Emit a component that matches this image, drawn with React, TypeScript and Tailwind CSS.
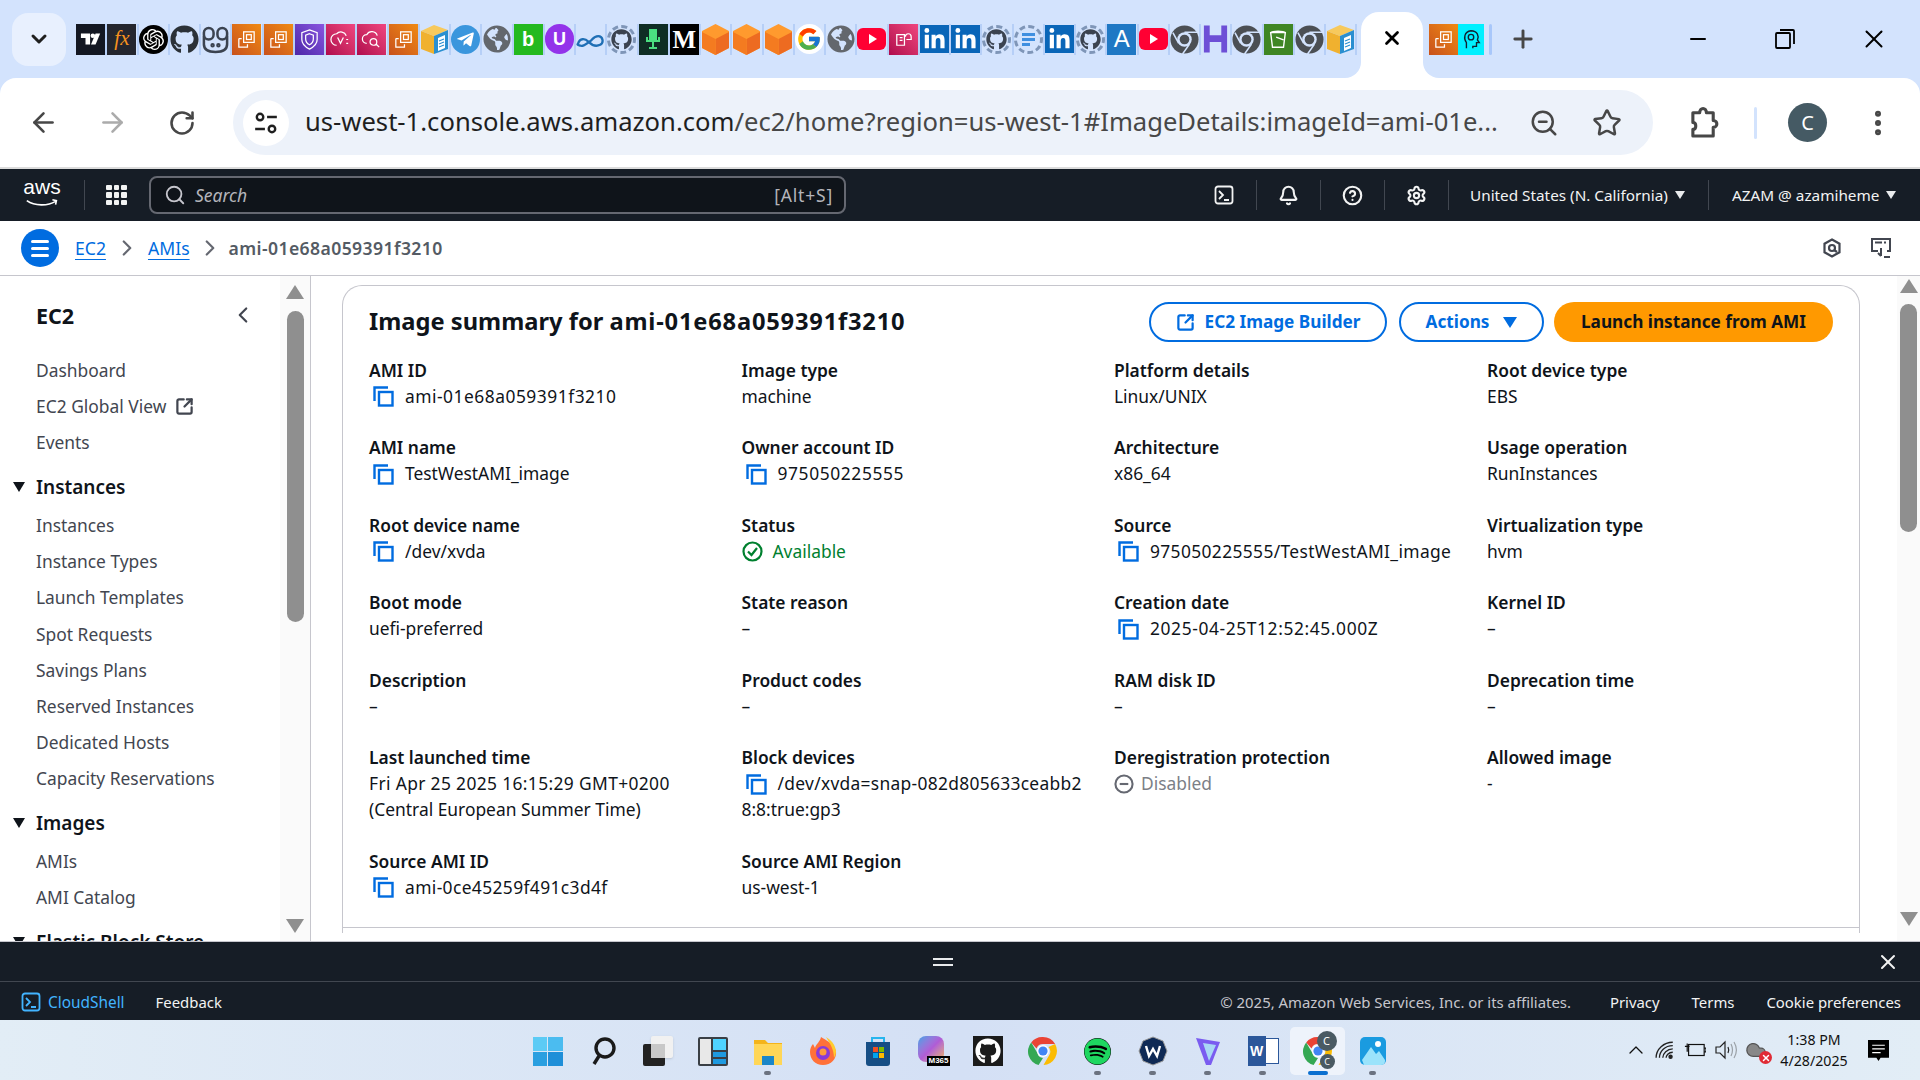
import type { ReactNode } from 'react';
import {
  ArrowLeft, ArrowRight, RotateCw, ZoomOut, Star, EllipsisVertical, X, Minus, Plus, ChevronDown,
  Search, Bell, CircleHelp, Settings, ChevronLeft, ChevronRight, ChevronUp, SquareArrowOutUpRight,
  Cloud,
} from 'lucide-react';
import { FaGithub, FaLinkedinIn, FaTelegramPlane, FaSpotify, FaGlobeAmericas } from 'react-icons/fa';
import { FcGoogle } from 'react-icons/fc';
import { SiOpenai } from 'react-icons/si';

const sans = 'font-["Noto_Sans",sans-serif]';

function Ec2Fav() {
  return (
    <div className="flex h-[31px] w-[29px] items-center justify-center bg-gradient-to-tr from-[#c8511b] to-[#f08a12]">
      <svg viewBox="0 0 24 24" className="h-[23px] w-[23px]" fill="none" stroke="#fff" strokeWidth="1.3">
        <rect x="9" y="4" width="11" height="11" />
        <rect x="12" y="7" width="5" height="5" />
        <path d="M4 11h3M4 11v9h9v-3" />
      </svg>
    </div>
  );
}

function PinkFav({ kind }: { kind: 'shield' | 'vpc' | 'cloud' | 'doc' }) {
  const bg = kind === 'shield' ? 'from-[#4d27a8] to-[#8a55e0]' : 'from-[#b0084d] to-[#f0457f]';
  return (
    <div className={`flex h-[31px] w-[29px] items-center justify-center bg-gradient-to-tr ${bg}`}>
      <svg viewBox="0 0 24 24" className="h-[23px] w-[23px]" fill="none" stroke="#fff" strokeWidth="1.3">
        {kind === 'shield' && <path d="M12 2l8 3v7c0 5-4 8-8 10-4-2-8-5-8-10V5zM12 6l4 1.5v4c0 3-2 5-4 6-2-1-4-3-4-6v-4z" />}
        {kind === 'vpc' && <path d="M8 18a5 5 0 010-12 6 6 0 0110 2M9 10l3 6 3-6M18 12h2M18 16h2" />}
        {kind === 'cloud' && <path d="M7 16a4 4 0 010-9 6 6 0 0111 1M14 11a3 3 0 100 7 3 3 0 000-7zM17 17l3 3" />}
        {kind === 'doc' && <path d="M5 7h8v11H5zM8 10h3M8 13h3M14 9a3 3 0 016 0v3h-5" />}
      </svg>
    </div>
  );
}

function BoxFav() {
  return (
    <svg viewBox="0 0 29 31" className="h-[31px] w-[29px]">
      <path d="M1 7l13-6 14 5-14 6z" fill="#f7c95c" />
      <path d="M1 7l13 5v18L1 25z" fill="#f0b12f" />
      <path d="M14 12l14-6v19l-14 5z" fill="#2a8fd0" />
      <path d="M18 14l7-3v13l-7 3z" fill="#fff" />
      <path d="M19 17l5-2M19 20l5-2M19 23l5-2" stroke="#2a8fd0" strokeWidth="1.2" />
    </svg>
  );
}

function HexFav() {
  return (
    <svg viewBox="0 0 29 31" className="h-[31px] w-[29px]">
      <path d="M14.5 0L28 7v17l-13.5 7L1 24V7z" fill="#ff9a2e" />
      <path d="M14.5 15L28 8v16l-13.5 7z" fill="#ed6b21" />
      <path d="M14.5 15L1 8v16l13.5 7z" fill="#f47b20" />
    </svg>
  );
}

function GhDashed() {
  return (
    <div className="flex h-[29px] w-[29px] items-center justify-center rounded-full border-[3px] border-dashed border-[#7f96b8]">
      <FaGithub className="h-[21px] w-[21px] text-[#3b4350]" />
    </div>
  );
}

function ChromeGray() {
  return (
    <svg viewBox="0 0 30 30" className="h-[29px] w-[29px]">
      <circle cx="15" cy="15" r="14.5" fill="#4b4f54" />
      <circle cx="15" cy="15" r="7.5" fill="#d3e3fd" />
      <circle cx="15" cy="15" r="5" fill="#4b4f54" />
      <path d="M15 7.5h13M9 19L3 8M20 20l-7 10" stroke="#d3e3fd" strokeWidth="1.6" />
    </svg>
  );
}

function Square({ bg, children }: { bg: string; children: ReactNode }) {
  return <div className={`flex h-[31px] w-[29px] items-center justify-center ${bg}`}>{children}</div>;
}

function Linked() {
  return (
    <div className="flex h-[28px] w-[29px] items-center justify-center bg-[#0a66b8]">
      <FaLinkedinIn className="h-[23px] w-[23px] text-white" />
    </div>
  );
}

function Yt() {
  return (
    <div className="flex h-[22px] w-[29px] items-center justify-center rounded-[6px] bg-[#ff0033]">
      <div className="ml-[2px] h-0 w-0 border-y-[5px] border-l-[8px] border-y-transparent border-l-white" />
    </div>
  );
}

const Globe = () => <FaGlobeAmericas className="h-[28px] w-[28px] text-[#63676d]" />;

const favicons: ReactNode[] = [
  <Square bg="bg-[#131722]">
    <svg viewBox="0 0 24 24" className="h-[22px] w-[22px]" fill="#fff"><path d="M1 6h10v12H6v-7H1z" /><circle cx="14" cy="8.5" r="2.5" /><path d="M17 18l5-12h-5l-5 12z" /></svg>
  </Square>,
  <Square bg="bg-[#24262e]"><span className="text-[21px] italic text-[#f7931e] font-['Liberation_Serif',serif]">fx</span></Square>,
  <div className="flex h-[29px] w-[29px] items-center justify-center rounded-full bg-black"><SiOpenai className="h-[21px] w-[21px] text-white" /></div>,
  <FaGithub className="h-[29px] w-[29px] text-[#2b3137]" />,
  <svg viewBox="0 0 30 30" className="h-[29px] w-[29px]" fill="none" stroke="#3b4350" strokeWidth="2.6"><rect x="3" y="3" width="10" height="12" rx="5" /><rect x="17" y="3" width="10" height="12" rx="5" /><path d="M3 11v9c0 5 4 8 12 8s12-3 12-8v-9" /><circle cx="12" cy="21" r="1" /><circle cx="18" cy="21" r="1" /></svg>,
  <Ec2Fav />,
  <Ec2Fav />,
  <PinkFav kind="shield" />,
  <PinkFav kind="vpc" />,
  <PinkFav kind="cloud" />,
  <Ec2Fav />,
  <BoxFav />,
  <div className="flex h-[29px] w-[29px] items-center justify-center rounded-full bg-[#3a96dd]"><FaTelegramPlane className="h-[19px] w-[19px] text-white" /></div>,
  <Globe />,
  <Square bg="bg-[#24b91f]"><span className="text-[20px] font-bold text-white font-['Liberation_Sans',sans-serif]">b</span></Square>,
  <div className="flex h-[30px] w-[29px] items-center justify-center rounded-full bg-[#9333ea]"><span className="text-[18px] font-bold text-white font-['Liberation_Sans',sans-serif]">U</span></div>,
  <svg viewBox="0 0 30 20" className="h-[20px] w-[29px]" fill="none" stroke="#1f6fb5" strokeWidth="2.4"><path d="M2 15c2-6 7-6 11-2s8 5 12 3 3-9-2-9-6 4-8 5-7 6-10 5-4-1-3-2z" /></svg>,
  <GhDashed />,
  <Square bg="bg-[#0f2d24]"><svg viewBox="0 0 24 24" className="h-[24px] w-[24px]" fill="none" stroke="#4ade80" strokeWidth="2"><rect x="9" y="3" width="6" height="10" fill="#4ade80" /><path d="M6 10v4h12v-4M12 14v6M8 21h8" /></svg></Square>,
  <Square bg="bg-black"><span className="text-[25px] font-bold leading-none text-white font-['Liberation_Serif',serif]">M</span></Square>,
  <HexFav />,
  <HexFav />,
  <HexFav />,
  <div className="flex h-[30px] w-[29px] items-center justify-center rounded-full bg-white"><FcGoogle className="h-[26px] w-[26px]" /></div>,
  <Globe />,
  <Yt />,
  <PinkFav kind="doc" />,
  <Linked />,
  <Linked />,
  <GhDashed />,
  <div className="flex h-[29px] w-[29px] flex-col items-start justify-center gap-[2px] rounded-full border-[3px] border-dashed border-[#7f96b8] pl-[5px]"><div className="h-[3px] w-[13px] bg-[#3f8fe0]" /><div className="h-[3px] w-[13px] bg-[#3f8fe0]" /><div className="h-[3px] w-[8px] bg-[#3f8fe0]" /></div>,
  <Linked />,
  <GhDashed />,
  <Square bg="bg-[#1f78c4]"><span className="text-[24px] text-white font-['Liberation_Sans',sans-serif]">A</span></Square>,
  <Yt />,
  <ChromeGray />,
  <svg viewBox="0 0 30 30" className="h-[30px] w-[29px]" fill="#6d4fd6"><path d="M3 1h6v10h12V1h6v28h-6V18H9v11H3z" /></svg>,
  <ChromeGray />,
  <Square bg="bg-[#3f8624]"><svg viewBox="0 0 24 24" className="h-[22px] w-[22px]" fill="none" stroke="#fff" strokeWidth="1.5"><path d="M4 5h16l-2 16H6zM4 5c2-2 14-2 16 0M10 10l8 3" /></svg></Square>,
  <ChromeGray />,
  <BoxFav />,
];

function Tabs() {
  return (
    <div className="relative flex h-[78px] items-center bg-[#d3e3fd] pl-[12px]">
      <div className="flex h-[53px] w-[54px] items-center justify-center rounded-[16px] bg-[#e8f0fe]">
        <ChevronDown className="h-[24px] w-[24px] text-[#1f1f1f]" strokeWidth={3} />
      </div>
      <div className="ml-[10px] flex items-center">
        {favicons.map((icon, i) => (
          <div key={i} className="flex h-[31px] w-[31.25px] items-center justify-center border-r-2 border-[#b6cff7]">{icon}</div>
        ))}
      </div>
      <div className="relative ml-[4px] flex h-[66px] w-[62px] items-center justify-center self-end rounded-t-[18px] bg-white pb-[14px]">
        <X className="h-[22px] w-[22px] text-black" strokeWidth={3} />
        <div className="absolute bottom-0 left-[-16px] h-[16px] w-[16px] bg-white"><div className="h-full w-full rounded-br-[16px] bg-[#d3e3fd]" /></div>
        <div className="absolute bottom-0 right-[-16px] h-[16px] w-[16px] bg-white"><div className="h-full w-full rounded-bl-[16px] bg-[#d3e3fd]" /></div>
      </div>
      <div className="ml-[6px]"><Ec2Fav /></div>
      <div className="flex h-[31px] w-[26px] items-center justify-center bg-[#00f0ff]">
        <svg viewBox="0 0 24 24" className="h-[24px] w-[22px]" fill="none" stroke="#123" strokeWidth="1.5"><path d="M7 22v-6C4 12 4 4 12 3c7 0 9 6 7 10l2 3h-3v4h-4v2" /><circle cx="12" cy="10" r="3" /></svg>
      </div>
      <div className="ml-[5px] h-[31px] w-[3px] rounded bg-[#a8c7fa]" />
      <Plus className="ml-[17px] h-[28px] w-[28px] text-[#474747]" strokeWidth={2.5} />
      <Minus className="ml-[149px] h-[24px] w-[24px] text-black" strokeWidth={2} />
      <svg viewBox="0 0 20 20" className="ml-[65px] h-[20px] w-[20px]" fill="none" stroke="#000" strokeWidth="1.8"><rect x="1" y="4" width="14" height="15" rx="1" /><path d="M5 1h13a1 1 0 011 1v13" /></svg>
      <X className="ml-[64px] h-[30px] w-[30px] text-black" strokeWidth={1.6} />
    </div>
  );
}

function Toolbar() {
  return (
    <div className="bg-[#d3e3fd]">
      <div className="flex h-[89px] items-center rounded-t-[16px] bg-white pl-[28px]">
        <ArrowLeft className="h-[31px] w-[31px] text-[#474747]" strokeWidth={2} />
        <ArrowRight className="ml-[38px] h-[31px] w-[31px] text-[#ababab]" strokeWidth={2} />
        <RotateCw className="ml-[40px] h-[28px] w-[28px] text-[#474747]" strokeWidth={2.2} />
        <div className="ml-[37px] flex h-[65px] w-[1420px] items-center rounded-full bg-[#edf2fa] pl-[10px]">
          <div className="flex h-[46px] w-[46px] items-center justify-center rounded-full bg-white">
            <svg viewBox="0 0 24 24" className="h-[26px] w-[26px]" fill="none" stroke="#1f1f1f" strokeWidth="2.2"><circle cx="6.5" cy="6.5" r="3" /><path d="M13 6.5h9M2 17.5h9" /><circle cx="17.5" cy="17.5" r="3" /></svg>
          </div>
          <span className={`ml-[16px] w-[1191px] whitespace-nowrap text-[25.6px] text-[#474747] ${sans}`}>
            <span className="text-[#1f1f1f]">us-west-1.console.aws.amazon.com</span>/ec2/home?region=us-west-1#ImageDetails:imageId=ami-01e...
          </span>
          <ZoomOut className="ml-[33px] h-[30px] w-[30px] text-[#474747]" strokeWidth={2} />
          <Star className="ml-[33px] h-[30px] w-[30px] text-[#474747]" strokeWidth={2} />
        </div>
        <svg viewBox="0 0 32 34" className="ml-[36px] h-[33px] w-[31px]" fill="none" stroke="#474747" strokeWidth="3.2" strokeLinejoin="round">
          <path d="M4 7h7c0-6 7-6 7 0h7v8c5 0 5 7 0 7v9H4v-7c4 0 4-7 0-7z" />
        </svg>
        <div className="ml-[34px] h-[32px] w-[3px] rounded bg-[#d3e3fd]" />
        <div className={`ml-[31px] flex h-[39px] w-[39px] items-center justify-center rounded-full bg-[#455a64] text-[20px] text-white ${sans}`}>C</div>
        <EllipsisVertical className="ml-[35px] h-[32px] w-[32px] text-[#474747]" strokeWidth={2.5} />
      </div>
      <div className="h-[2px] bg-[#dcdcdc]" />
    </div>
  );
}

function Divider({ className }: { className: string }) {
  return <div className={`h-[30px] w-px bg-[#414750] ${className}`} />;
}

function Caret() {
  return <div className="h-0 w-0 border-x-[5px] border-t-[8px] border-x-transparent border-t-[#e9ebed]" />;
}

function TermIcon({ className }: { className: string }) {
  return (
    <svg viewBox="0 0 20 20" className={className} fill="none" stroke="currentColor" strokeWidth="1.8">
      <rect x="1.5" y="1.5" width="17" height="17" rx="2.5" />
      <path d="M5 6l4 4-4 4M10 15h5" />
    </svg>
  );
}

function AwsHeader() {
  return (
    <div className={`flex h-[52px] items-center bg-[#161d26] ${sans}`}>
      <div className="ml-[22px] flex w-[40px] flex-col items-center text-white">
        <span className="mt-[-6px] h-[20px] text-[21px] leading-[20px] font-['Liberation_Sans',sans-serif]">aws</span>
        <svg viewBox="0 0 40 10" className="mt-[2px] h-[8px] w-[40px]" fill="none" stroke="#fff" strokeWidth="2"><path d="M1 2c10 7 26 7 36 1M33 1l5 1-1 5" /></svg>
      </div>
      <div className="ml-[22px] h-[30px] w-px bg-[#414750]" />
      <div className="ml-[21px] grid w-[21px] grid-cols-3 gap-[2px]">
        {Array.from({ length: 9 }).map((_, i) => <div key={i} className="h-[5.5px] w-[5.5px] rounded-[1px] bg-[#f2f3f3]" />)}
      </div>
      <div className="ml-[22px] flex h-[38px] w-[697px] items-center rounded-[8px] border-2 border-[#656871] bg-[#0f141a] pl-[13px] pr-[11px]">
        <Search className="h-[22px] w-[22px] text-[#c6c6cd]" strokeWidth={2} />
        <span className="ml-[9px] flex-1 text-[17.5px] italic text-[#b4b4bb]">Search</span>
        <span className="text-[17.5px] tracking-[0.8px] text-[#b4b4bb]">[Alt+S]</span>
      </div>
      <TermIcon className="ml-[368px] h-[20px] w-[20px] text-[#f2f3f3]" />
      <Divider className="ml-[22px]" />
      <Bell className="ml-[21px] h-[21px] w-[21px] text-[#f2f3f3]" strokeWidth={2.4} />
      <Divider className="ml-[21px]" />
      <CircleHelp className="ml-[21px] h-[21px] w-[21px] text-[#f2f3f3]" strokeWidth={2.4} />
      <Divider className="ml-[21px]" />
      <Settings className="ml-[21px] h-[21px] w-[21px] text-[#f2f3f3]" strokeWidth={2.4} />
      <Divider className="ml-[21px]" />
      <span className="ml-[21px] whitespace-nowrap text-[15.3px] text-[#f2f3f3]">United States (N. California)</span>
      <div className="ml-[7px]"><Caret /></div>
      <Divider className="ml-[23px]" />
      <span className="ml-[23px] whitespace-nowrap text-[15.3px] text-[#f2f3f3]">AZAM @ azamiheme</span>
      <div className="ml-[7px]"><Caret /></div>
    </div>
  );
}

function Breadcrumb() {
  return (
    <div className={`flex h-[55px] items-center border-b border-[#c6c6cd] bg-white text-[17.6px] ${sans}`}>
      <div className="ml-[21px] flex h-[38px] w-[38px] flex-col items-center justify-center gap-[4px] rounded-full bg-[#006ce0]">
        <div className="h-[3px] w-[18px] rounded bg-white" />
        <div className="h-[3px] w-[18px] rounded bg-white" />
        <div className="h-[3px] w-[18px] rounded bg-white" />
      </div>
      <span className="ml-[16px] pt-[1px] text-[#006ce0] underline underline-offset-4">EC2</span>
      <ChevronRight className="ml-[8px] h-[26px] w-[26px] text-[#656871]" strokeWidth={2} />
      <span className="ml-[8px] pt-[1px] text-[#006ce0] underline underline-offset-4">AMIs</span>
      <ChevronRight className="ml-[7px] h-[26px] w-[26px] text-[#656871]" strokeWidth={2} />
      <span className="ml-[6px] pt-[1px] font-semibold tracking-[0.4px] text-[#545b64]">ami-01e68a059391f3210</span>
      <div className="flex-1" />
      <svg viewBox="0 0 20 20" className="h-[20px] w-[20px]" fill="none" stroke="#424650" strokeWidth="2.2"><path d="M10 1.5l7.5 4.2v8.6L10 18.5l-7.5-4.2V5.7z" /><circle cx="10" cy="10" r="3" /><path d="M12 12l3 2" /></svg>
      <svg viewBox="0 0 22 22" className="ml-[28px] mr-[28px] h-[22px] w-[22px]" fill="none" stroke="#424650" strokeWidth="2"><path d="M8 14H2V2h18v12h-3M5 5.5h7M14 5.5h2M11 11v8M8 16l3 3M14 20h6" /></svg>
    </div>
  );
}

function ScrollArrow({ up }: { up?: boolean }) {
  return up ? (
    <div className="h-0 w-0 border-x-[9px] border-b-[14px] border-x-transparent border-b-[#8f8f8f]" />
  ) : (
    <div className="h-0 w-0 border-x-[9px] border-t-[14px] border-x-transparent border-t-[#8f8f8f]" />
  );
}

function NavItem({ children }: { children: ReactNode }) {
  return <div className="flex h-[36.1px] items-center pl-[36px] text-[17.4px] text-[#424650]">{children}</div>;
}

function NavHead({ children, className }: { children: ReactNode; className: string }) {
  return (
    <div className={`flex h-[38px] items-center pl-[13px] text-[19px] font-semibold text-[#0f141a] ${className}`}>
      <div className="mr-[11px] h-0 w-0 border-x-[6px] border-t-[10px] border-x-transparent border-t-[#0f141a]" />
      {children}
    </div>
  );
}

function Sidebar() {
  return (
    <aside className={`flex h-full w-[311px] shrink-0 border-r border-[#c6c6cd] ${sans}`}>
      <nav className="w-[280px] shrink-0 overflow-hidden">
        <div className="mt-[26px] mb-[22px] flex h-[28px] items-center justify-between pl-[36px] pr-[30px]">
          <span className="text-[21.5px] font-bold text-[#0f141a]">EC2</span>
          <ChevronLeft className="mt-[-2px] mr-[-6px] h-[26px] w-[26px] text-[#424650]" strokeWidth={2} />
        </div>
        <NavItem>Dashboard</NavItem>
        <NavItem>EC2 Global View<SquareArrowOutUpRight className="ml-[9px] h-[19px] w-[19px] text-[#424650]" strokeWidth={2.8} /></NavItem>
        <NavItem>Events</NavItem>
        <NavHead className="mt-[8px] mb-[1px]">Instances</NavHead>
        <NavItem>Instances</NavItem>
        <NavItem>Instance Types</NavItem>
        <NavItem>Launch Templates</NavItem>
        <NavItem>Spot Requests</NavItem>
        <NavItem>Savings Plans</NavItem>
        <NavItem>Reserved Instances</NavItem>
        <NavItem>Dedicated Hosts</NavItem>
        <NavItem>Capacity Reservations</NavItem>
        <NavHead className="mt-[8px] mb-[1px]">Images</NavHead>
        <NavItem>AMIs</NavItem>
        <NavItem>AMI Catalog</NavItem>
        <NavHead className="mt-[8px] whitespace-nowrap">Elastic Block Store</NavHead>
      </nav>
      <div className="flex w-[30px] flex-col items-center bg-[#fafafa] pt-[9px] pb-[8px]">
        <ScrollArrow up />
        <div className="mt-[12px] h-[311px] w-[17px] rounded-full bg-[#8f8f8f]" />
        <div className="flex-1" />
        <ScrollArrow />
      </div>
    </aside>
  );
}

function CopyIcon({ className = '' }: { className?: string }) {
  return (
    <svg viewBox="0 0 21 21" className={`inline-block h-[21px] w-[21px] shrink-0 ${className}`} fill="none" stroke="#006ce0" strokeWidth="2.4">
      <path d="M1.5 15V1.5H15" />
      <rect x="6" y="6" width="13.5" height="13.5" />
    </svg>
  );
}

function Field({ label, children }: { label: string; children: ReactNode }) {
  return (
    <div className="text-[17.4px] leading-[25.8px] text-[#0f141a]">
      <div className="font-semibold">{label}</div>
      <div>{children}</div>
    </div>
  );
}

function Copyable({ children, className = '' }: { children: ReactNode; className?: string }) {
  return (
    <div className={`flex items-center whitespace-nowrap ${className}`}>
      <CopyIcon className="ml-[4px] mr-[11px]" />
      {children}
    </div>
  );
}

function Summary() {
  return (
    <div className="flex h-[648px] w-[1518px] flex-col rounded-t-[20px] border-x border-t border-[#c6c6cd]">
      <div className="mt-[16px] flex h-[40px] items-center pl-[26px] pr-[26px]">
        <h1 className="flex-1 text-[23.7px] font-bold text-[#0f141a]">
          Image summary for <span className="tracking-[0.8px]">ami-01e68a059391f3210</span>
        </h1>
        <button className="flex h-[40px] w-[238px] items-center justify-center gap-[10px] rounded-full border-2 border-[#006ce0] text-[17.2px] font-bold text-[#006ce0]">
          <SquareArrowOutUpRight className="h-[19px] w-[19px]" strokeWidth={2.8} />
          EC2 Image Builder
        </button>
        <button className="ml-[12px] flex h-[40px] w-[145px] items-center justify-center gap-[14px] rounded-full border-2 border-[#006ce0] text-[17.2px] font-bold text-[#006ce0]">
          Actions
          <div className="h-0 w-0 border-x-[7px] border-t-[11px] border-x-transparent border-t-[#006ce0]" />
        </button>
        <button className="ml-[10px] flex h-[40px] w-[279px] items-center justify-center rounded-full bg-[#ff9900] text-[17.2px] font-bold text-[#0f141a]">
          Launch instance from AMI
        </button>
      </div>
      <div className="mt-[16px] grid flex-1 grid-cols-[372.5px_372.5px_373px_1fr] content-start gap-y-[25.9px] pl-[26px]">
        <Field label="AMI ID"><Copyable className="tracking-[0.5px]">ami-01e68a059391f3210</Copyable></Field>
        <Field label="Image type">machine</Field>
        <Field label="Platform details">Linux/UNIX</Field>
        <Field label="Root device type">EBS</Field>
        <Field label="AMI name"><Copyable>TestWestAMI_image</Copyable></Field>
        <Field label="Owner account ID"><Copyable className="tracking-[0.6px]">975050225555</Copyable></Field>
        <Field label="Architecture">x86_64</Field>
        <Field label="Usage operation">RunInstances</Field>
        <Field label="Root device name"><Copyable>/dev/xvda</Copyable></Field>
        <Field label="Status">
          <div className="flex items-center text-[#00802f]">
            <svg viewBox="0 0 21 21" className="mr-[10px] h-[21px] w-[21px]" fill="none" stroke="#00802f" strokeWidth="2.2"><circle cx="10.5" cy="10.5" r="9" /><path d="M6 10.5l3.5 3.5 5.5-7" /></svg>
            Available
          </div>
        </Field>
        <Field label="Source"><Copyable className="tracking-[0.36px]">975050225555/TestWestAMI_image</Copyable></Field>
        <Field label="Virtualization type">hvm</Field>
        <Field label="Boot mode">uefi-preferred</Field>
        <Field label="State reason">–</Field>
        <Field label="Creation date"><Copyable className="tracking-[0.6px]">2025-04-25T12:52:45.000Z</Copyable></Field>
        <Field label="Kernel ID">–</Field>
        <Field label="Description">–</Field>
        <Field label="Product codes">–</Field>
        <Field label="RAM disk ID">–</Field>
        <Field label="Deprecation time">–</Field>
        <Field label="Last launched time"><span className="tracking-[0.36px]">Fri Apr 25 2025 16:15:29 GMT+0200</span><br />(Central European Summer Time)</Field>
        <Field label="Block devices">
          <Copyable className="tracking-[0.3px]">/dev/xvda=snap-082d805633ceabb2</Copyable>
          8:8:true:gp3
        </Field>
        <Field label="Deregistration protection">
          <div className="flex items-center text-[#7c7f87]">
            <svg viewBox="0 0 21 21" className="mr-[7px] h-[20px] w-[20px]" fill="none" stroke="#656871" strokeWidth="2.2"><circle cx="10.5" cy="10.5" r="9" /><path d="M6 10.5h9" /></svg>
            Disabled
          </div>
        </Field>
        <Field label="Allowed image">-</Field>
        <Field label="Source AMI ID"><Copyable className="tracking-[0.38px]">ami-0ce45259f491c3d4f</Copyable></Field>
        <Field label="Source AMI Region">us-west-1</Field>
      </div>
      <div className="h-[6px] border-t border-[#c6c6cd]" />
    </div>
  );
}

function Main() {
  return (
    <main className={`flex h-full flex-1 bg-white ${sans}`}>
      <div className="flex-1 pl-[31px] pt-[9px]"><Summary /></div>
      <div className="flex w-[23px] flex-col items-center bg-[#fafafa] pt-[3px] pb-[15px]">
        <ScrollArrow up />
        <div className="mt-[11px] h-[228px] w-[17px] rounded-full bg-[#8f8f8f]" />
        <div className="flex-1" />
        <ScrollArrow />
      </div>
    </main>
  );
}

function Shell() {
  return (
    <div className="border-t border-[#c6c6cd] bg-[#161d26]">
      <div className="flex h-[40px] items-center border-b border-[#414750] pr-[20px]">
        <div className="ml-[933px] flex w-[20px] flex-col gap-[4px]">
          <div className="h-[2px] bg-[#e9ebed]" />
          <div className="h-[2px] bg-[#e9ebed]" />
        </div>
        <div className="flex-1" />
        <X className="h-[24px] w-[24px] text-[#f2f3f3]" strokeWidth={2} />
      </div>
    </div>
  );
}

function Footer() {
  return (
    <footer className={`flex h-[38px] items-center bg-[#161d26] pt-[2px] text-[14.9px] text-[#f2f3f3] ${sans}`}>
      <TermIcon className="ml-[21px] h-[20px] w-[20px] text-[#42b4ff]" />
      <span className="ml-[7px] pt-[1px] text-[15.4px] leading-[20px] text-[#42b4ff]">CloudShell</span>
      <span className="ml-[31px]">Feedback</span>
      <div className="flex-1" />
      <span className="text-[#c6c6cd]">© 2025, Amazon Web Services, Inc. or its affiliates.</span>
      <span className="ml-[39px]">Privacy</span>
      <span className="ml-[32px]">Terms</span>
      <span className="ml-[32px] mr-[19px]">Cookie preferences</span>
    </footer>
  );
}

function ChromeLogo() {
  return (
    <svg viewBox="0 0 30 30" className="h-[30px] w-[30px]">
      <path d="M15 1a14 14 0 0112.1 7H15a7 7 0 00-6.5 4.4L3.2 6.5A14 14 0 0115 1z" fill="#ea4335" />
      <path d="M3.2 6.5l6 10.2A7 7 0 0015 22l-4.4 7A14 14 0 013.2 6.5z" fill="#34a853" />
      <path d="M27.1 8a14 14 0 01-11.6 21L21 19.5A7 7 0 0020.5 11z" fill="#fbbc04" />
      <circle cx="15" cy="15" r="6" fill="#fff" />
      <circle cx="15" cy="15" r="4.6" fill="#4285f4" />
    </svg>
  );
}

function TaskSlot({ dot, active, children }: { dot?: boolean; active?: boolean; children: ReactNode }) {
  return (
    <div className={`relative flex h-[48px] w-[55px] items-center justify-center rounded-[5px] ${active ? 'bg-[#eef3fb]' : ''}`}>
      {children}
      {dot && <div className="absolute bottom-[0px] h-[4px] w-[7px] rounded-full bg-[#6b7280]" />}
      {active && <div className="absolute bottom-0 h-[4px] w-[20px] rounded-full bg-[#0a6fd0]" />}
    </div>
  );
}

function Taskbar() {
  return (
    <div className="relative flex h-[60px] items-center justify-center bg-gradient-to-r from-[#e2edf6] via-[#d4e0f5] to-[#e2edf6]">
      <div className="flex w-[880px] items-center pt-[2px]">
        <TaskSlot>
          <div className="grid h-[29px] w-[30px] grid-cols-2 gap-[1px]">
            <div className="bg-[#5ccbf5]" /><div className="bg-[#4bbcf0]" /><div className="bg-[#2a9fe0]" /><div className="bg-[#1f8fd8]" />
          </div>
        </TaskSlot>
        <TaskSlot>
          <svg viewBox="0 0 30 30" className="h-[30px] w-[30px]" fill="none" stroke="#1a1a1a" strokeWidth="3.4"><circle cx="17" cy="12" r="9" /><path d="M11 20l-5 8" /></svg>
        </TaskSlot>
        <TaskSlot>
          <div className="relative h-[30px] w-[30px]">
            <div className="absolute right-0 top-0 h-[22px] w-[22px] rounded-[2px] bg-[#f1f1f1] shadow" />
            <div className="absolute bottom-0 left-0 h-[22px] w-[22px] rounded-[2px] bg-[#222]" />
            <div className="absolute left-[8px] top-[8px] h-[14px] w-[14px] bg-[#c8c8c8]" />
          </div>
        </TaskSlot>
        <TaskSlot>
          <div className="flex h-[29px] w-[30px] gap-[2px] rounded-[2px] bg-[#3a3f45] p-[2px]">
            <div className="w-[11px] bg-[#e8e8e8]" />
            <div className="flex flex-1 flex-col gap-[2px]"><div className="flex-1 bg-[#4fd3ff]" /><div className="h-[5px] bg-[#1f9ae0]" /><div className="h-[5px] bg-[#1f9ae0]" /></div>
          </div>
        </TaskSlot>
        <TaskSlot dot>
          <svg viewBox="0 0 30 30" className="h-[30px] w-[30px]"><path d="M1 4h11l3 3h14v22H1z" fill="#f4b41a" /><path d="M1 8h28v21H1z" fill="#ffd657" /><rect x="9" y="20" width="12" height="9" fill="#1a86c8" /></svg>
        </TaskSlot>
        <TaskSlot>
          <svg viewBox="0 0 30 30" className="h-[30px] w-[30px]">
            <path d="M15 29C7 29 2 23 2 16c0-3 1-6 3-8l2 4c1-4 5-6 6-11 5 3 13 7 15 14 1 8-5 14-13 14z" fill="#ff7139" />
            <path d="M18 1c5 3 9 7 10 14 0 3-1 5-2 7C26 13 22 8 18 1z" fill="#ffcb2e" />
            <circle cx="15" cy="17" r="7" fill="#8a3ad6" />
            <circle cx="15" cy="16" r="3.5" fill="#ff9a3c" />
          </svg>
        </TaskSlot>
        <TaskSlot>
          <svg viewBox="0 0 30 30" className="h-[30px] w-[30px]"><path d="M3 6h24v21a3 3 0 01-3 3H6a3 3 0 01-3-3z" fill="#164e85" /><path d="M9 6V2h12v4" fill="none" stroke="#27b5ee" strokeWidth="2" /><rect x="10" y="11" width="5" height="5" fill="#f25022" /><rect x="16" y="11" width="5" height="5" fill="#7fba00" /><rect x="10" y="17" width="5" height="5" fill="#00a4ef" /><rect x="16" y="17" width="5" height="5" fill="#ffb900" /></svg>
        </TaskSlot>
        <TaskSlot>
          <div className="relative h-[30px] w-[30px]">
            <div className="h-[26px] w-[26px] rounded-[8px] bg-gradient-to-br from-[#2b9fe6] via-[#b05cd6] to-[#f4b342]" />
            <div className="absolute bottom-0 right-[-2px] bg-black px-[1px] text-[8px] font-bold leading-[10px] text-white font-['Liberation_Sans',sans-serif]">M365</div>
          </div>
        </TaskSlot>
        <TaskSlot><div className="flex h-[30px] w-[30px] items-center justify-center bg-[#1b1b1b]"><FaGithub className="h-[26px] w-[26px] text-white" /></div></TaskSlot>
        <TaskSlot><ChromeLogo /></TaskSlot>
        <TaskSlot dot><div className="flex h-[27px] w-[27px] items-center justify-center rounded-full bg-black"><FaSpotify className="h-[27px] w-[27px] text-[#1ed760]" /></div></TaskSlot>
        <TaskSlot dot>
          <svg viewBox="0 0 30 30" className="h-[30px] w-[30px]"><path d="M15 1l10 4 4 10-4 10-10 4-10-4-4-10 4-10z" fill="#0f2a55" stroke="#999" strokeWidth="1" /><path d="M8 10l3 10 4-7 4 7 3-10" fill="none" stroke="#fff" strokeWidth="2.4" /></svg>
        </TaskSlot>
        <TaskSlot dot>
          <svg viewBox="0 0 30 30" className="h-[30px] w-[30px]"><path d="M3 2l24 4-9 23H13z" fill="#7a5cf0" /><path d="M10 7l13 2-7 16z" fill="#a9d7f5" /></svg>
        </TaskSlot>
        <TaskSlot dot>
          <div className="relative h-[30px] w-[30px]">
            <div className="absolute right-0 top-[3px] h-[24px] w-[22px] bg-white ring-1 ring-[#2b579a]" />
            <div className="absolute left-0 top-0 flex h-[30px] w-[18px] items-center justify-center bg-[#2b579a] text-[14px] font-bold text-white font-['Liberation_Sans',sans-serif]">W</div>
          </div>
        </TaskSlot>
        <TaskSlot active>
          <div className="relative"><ChromeLogo />
            <div className="absolute right-[-4px] top-[-5px] flex h-[20px] w-[20px] items-center justify-center rounded-full bg-[#4a5a63] text-[11px] text-white font-['Noto_Sans',sans-serif]">C</div>
            <div className="absolute bottom-[-3px] right-[-2px] flex h-[15px] w-[15px] items-center justify-center rounded-full bg-[#4a5a63] text-[9px] text-white font-['Noto_Sans',sans-serif]">C</div>
          </div>
        </TaskSlot>
        <TaskSlot dot>
          <svg viewBox="0 0 30 30" className="h-[30px] w-[30px]"><rect x="2" y="1" width="26" height="28" rx="5" fill="#1a9be0" /><path d="M4 24l9-13 5 7 3-3 6 9v1a4 4 0 01-4 4H6z" fill="#9be3fb" /><circle cx="20" cy="8" r="3" fill="#fff" /></svg>
        </TaskSlot>
      </div>
      <div className={`absolute right-[31px] top-0 flex h-full items-center text-[#111] ${sans}`}>
        <ChevronUp className="h-[24px] w-[24px]" strokeWidth={1.3} />
        <svg viewBox="0 0 18 18" className="ml-[7px] h-[20px] w-[20px]" fill="none" stroke="#222" strokeWidth="1.2"><path d="M1 16C1 8 8 2 16 2M4 16c0-6 5-11 12-11M7 16c0-4 4-8 9-8M10 16c0-2 2-5 6-5" /><circle cx="14" cy="15" r="1.4" fill="#222" /></svg>
        <svg viewBox="0 0 24 16" className="ml-[9px] h-[16px] w-[22px]" fill="none" stroke="#111" strokeWidth="1.3"><rect x="5" y="2" width="17" height="12" /><path d="M22 6h2v4h-2M1 4h5M3.5 1v9" /></svg>
        <svg viewBox="0 0 24 24" className="ml-[8px] h-[24px] w-[24px]" fill="none" stroke="#222" strokeWidth="1.2"><path d="M2 9h4l5-5v16l-5-5H2zM14 9c1 2 1 4 0 6" /><path d="M17 6c2 4 2 8 0 12M20 4c3 5 3 11 0 16" stroke="#9aa0a6" /></svg>
        <div className="relative ml-[7px]">
          <Cloud className="h-[22px] w-[22px] fill-[#888] text-[#555]" strokeWidth={1.4} />
          <div className="absolute bottom-[-3px] right-[-5px] flex h-[13px] w-[13px] items-center justify-center rounded-full bg-[#e02b35]"><X className="h-[10px] w-[10px] text-white" strokeWidth={3.5} /></div>
        </div>
        <div className="ml-[11px] flex w-[72px] flex-col items-center text-[14.2px] leading-[21px]">
          <span>1:38 PM</span>
          <span>4/28/2025</span>
        </div>
        <svg viewBox="0 0 20 20" className="ml-[18px] h-[21px] w-[21px]" fill="#000"><path d="M0 0h20v17h-8l-2 3-2-3H0z" /><path d="M4 5h12M4 8.5h12M4 12h8" stroke="#fff" strokeWidth="1.1" /></svg>
      </div>
    </div>
  );
}

export default function App() {
  return (
    <div className="flex h-screen w-[1920px] flex-col overflow-hidden">
      <Tabs />
      <Toolbar />
      <AwsHeader />
      <Breadcrumb />
      <div className="flex h-[665px] overflow-hidden">
        <Sidebar />
        <Main />
      </div>
      <Shell />
      <Footer />
      <Taskbar />
    </div>
  );
}
